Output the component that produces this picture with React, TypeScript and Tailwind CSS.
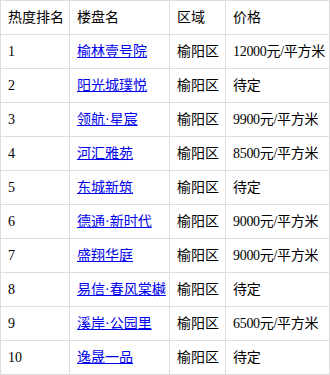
import React from "react";

const rows: [string, string, string][] = [
  ["1", "榆林壹号院", "12000元/平方米"],
  ["2", "阳光城璞悦", "待定"],
  ["3", "领航·星宸", "9900元/平方米"],
  ["4", "河汇雅苑", "8500元/平方米"],
  ["5", "东城新筑", "待定"],
  ["6", "德通·新时代", "9000元/平方米"],
  ["7", "盛翔华庭", "9000元/平方米"],
  ["8", "易信·春风棠樾", "待定"],
  ["9", "溪岸·公园里", "6500元/平方米"],
  ["10", "逸晟一品", "待定"],
];

export default function App() {
  return (
    <div
      className="w-[330px] bg-white text-black text-[14px]"
      style={{ fontFamily: '"Liberation Serif", "Noto Sans CJK SC", serif' }}
    >
      <table className="w-full border-collapse table-fixed">
        <colgroup>
          <col className="w-[69px]" />
          <col className="w-[100px]" />
          <col className="w-[56px]" />
          <col />
        </colgroup>
        <thead>
          <tr>
            {["热度排名", "楼盘名", "区域", "价格"].map((h) => (
              <th
                key={h}
                className="border border-[#dddddd] px-[7px] py-[8px] text-left font-normal leading-[17px] whitespace-nowrap"
              >
                {h}
              </th>
            ))}
          </tr>
        </thead>
        <tbody>
          {rows.map(([n, name, price]) => (
            <tr key={n}>
              <td className="border border-[#dddddd] px-[7px] py-[8px] leading-[17px] whitespace-nowrap">
                {n}
              </td>
              <td className="border border-[#dddddd] px-[7px] py-[8px] leading-[17px] whitespace-nowrap">
                <a href="#" className="text-[#0000ee] underline">
                  {name}
                </a>
              </td>
              <td className="border border-[#dddddd] px-[7px] py-[8px] leading-[17px] whitespace-nowrap">
                榆阳区
              </td>
              <td className="border border-[#dddddd] px-[7px] py-[8px] leading-[17px] whitespace-nowrap tracking-[-0.3px]">
                {price}
              </td>
            </tr>
          ))}
        </tbody>
      </table>
    </div>
  );
}
